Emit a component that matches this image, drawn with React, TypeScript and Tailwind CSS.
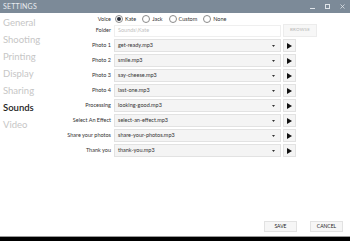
import React from 'react';

const sounds: [string, string][] = [
  ['Photo 1', 'get-ready.mp3'],
  ['Photo 2', 'smile.mp3'],
  ['Photo 3', 'say-cheese.mp3'],
  ['Photo 4', 'last-one.mp3'],
  ['Processing', 'looking-good.mp3'],
  ['Select An Effect', 'select-an-effect.mp3'],
  ['Share your photos', 'share-your-photos.mp3'],
  ['Thank you', 'thank-you.mp3'],
];

const nav = ['General', 'Shooting', 'Printing', 'Display', 'Sharing', 'Sounds', 'Video'];

const voices = ['Kate', 'Jack', 'Custom', 'None'];

function Radio({ label, checked }: { label: string; checked?: boolean }) {
  return (
    <div className="flex items-center gap-[2px]">
      <span className="w-[8px] h-[8px] rounded-full border border-[#8a8a8a] flex items-center justify-center">
        {checked && <span className="w-[4px] h-[4px] rounded-full bg-[#2a2f3a]" />}
      </span>
      <span>{label}</span>
    </div>
  );
}

export default function App() {
  return (
    <div className="w-[350px] h-[241px] flex flex-col bg-white overflow-hidden font-['Lato',sans-serif]">
      {/* Title bar */}
      <div className="h-[13px] bg-[#7c8a98] flex items-center justify-between pl-[3px] pr-[5px]">
        <span className="text-[7px] text-[#e9edf0] tracking-[0.2px]">SETTINGS</span>
        <div className="flex items-center gap-[10px] text-[#dfe4e9]">
          <span className="w-[5px] h-px bg-[#dfe4e9] mt-[3px]" />
          <span className="w-[5px] h-[5px] border border-[#dfe4e9]" />
          <svg width="5" height="5" viewBox="0 0 5 5">
            <path d="M0.5 0.5 L4.5 4.5 M4.5 0.5 L0.5 4.5" stroke="#dfe4e9" strokeWidth="0.8" />
          </svg>
        </div>
      </div>

      <div className="flex-1 flex">
        {/* Side nav */}
        <div className="w-[52px] pl-[3px] pt-[1px] flex flex-col">
          {nav.map((n) => (
            <span
              key={n}
              className={`text-[9.5px] leading-[17px] ${n === 'Sounds' ? 'text-[#1c1c1c] font-semibold' : 'text-[#c6c6c6]'}`}
            >
              {n}
            </span>
          ))}
        </div>

        {/* Form */}
        <div className="flex-1 pt-[1px] flex flex-col text-[5.5px] text-[#333]">
          <div className="h-[10px] flex items-center">
            <span className="w-[59px] text-right">Voice</span>
            <div className="ml-[4px] flex items-center gap-[6px]">
              {voices.map((v) => (
                <Radio key={v} label={v} checked={v === 'Kate'} />
              ))}
            </div>
          </div>

          <div className="h-[13px] flex items-center">
            <span className="w-[59px] text-right">Folder</span>
            <div className="ml-[3px] w-[167px] h-[12px] border border-[#efefef] flex items-center px-[3px] text-[#c2c2c2]">
              Sounds\Kate
            </div>
            <button className="ml-[2px] w-[34px] h-[13px] bg-[#f7f7f7] border border-[#ececec] text-[4.5px] text-[#b5b5b5] tracking-[0.2px]">
              BROWSE
            </button>
          </div>

          <div className="mt-[2px] flex flex-col gap-[2px]">
            {sounds.map(([label, file]) => (
              <div key={label} className="h-[13px] flex items-center">
                <span className="w-[59px] text-right whitespace-nowrap">{label}</span>
                <div className="ml-[3px] w-[167px] h-[13px] bg-[#f4f4f4] border border-[#e2e2e2] flex items-center justify-between pl-[3px] pr-[5px]">
                  <span>{file}</span>
                  <svg width="3" height="2" viewBox="0 0 3 2">
                    <path d="M0 0 L3 0 L1.5 2 Z" fill="#333" />
                  </svg>
                </div>
                <div className="ml-[2px] w-[13px] h-[13px] bg-[#f4f4f4] border border-[#e2e2e2] flex items-center justify-center">
                  <svg width="5" height="6" viewBox="0 0 5 6">
                    <path d="M0 0 L5 3 L0 6 Z" fill="#111" />
                  </svg>
                </div>
              </div>
            ))}
          </div>
        </div>
      </div>

      {/* Footer buttons */}
      <div className="flex justify-end gap-[13px] pr-[7px] pb-[4px]">
        <button className="w-[33px] h-[11px] bg-[#f6f6f6] border border-[#e2e2e2] text-[5px] text-[#222]">SAVE</button>
        <button className="w-[33px] h-[11px] bg-[#f6f6f6] border border-[#e2e2e2] text-[5px] text-[#222]">CANCEL</button>
      </div>
      <div className="h-[5px] bg-black border-t border-[#9a9a9a]" />
    </div>
  );
}
